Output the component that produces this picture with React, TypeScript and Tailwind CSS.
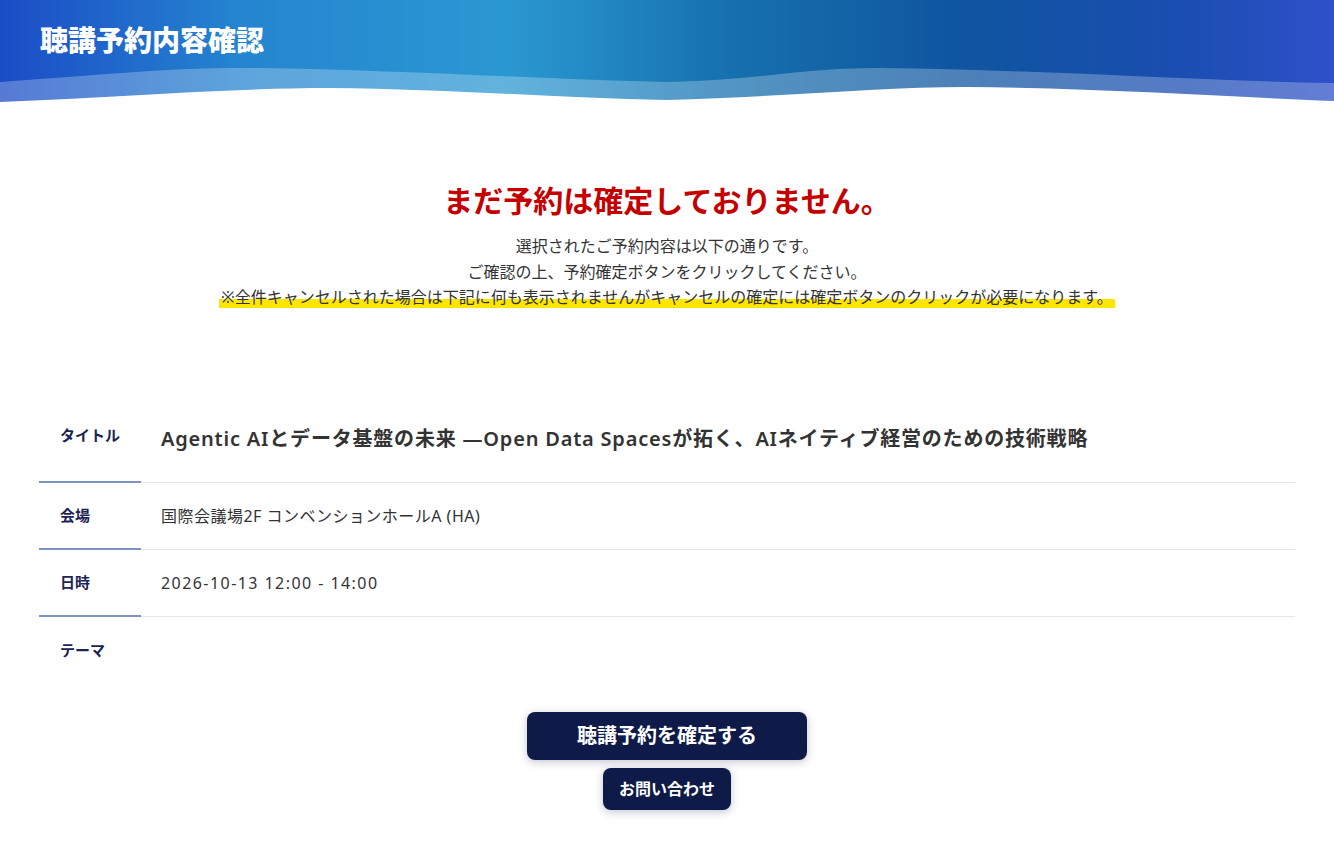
const font = 'font-["Noto_Sans","Noto_Sans_CJK_JP",sans-serif]';

function HeaderWave() {
  return (
    <svg
      className="absolute inset-x-0 bottom-0 h-[104px] w-full"
      viewBox="0 0 1334 104"
      preserveAspectRatio="none"
    >
      <path
        d="M0,82 C120,73 180,67 260,68 C400,70 560,80 667,82 C770,79 800,68 880,68 C1050,70 1200,81 1334,83 L1334,104 L0,104 Z"
        fill="#ffffff"
        fillOpacity="0.26"
      />
      <path
        d="M0,102 C120,97 230,88 330,88 C450,89 560,98 667,100 C780,97 880,87 967,87 C1100,88 1230,97 1334,101 L1334,104 L0,104 Z"
        fill="#ffffff"
      />
    </svg>
  );
}

export default function App() {
  const rows = [
    { label: '会場', value: '国際会議場2F コンベンションホールA (HA)', tracking: 'tracking-[0.03em]' },
    { label: '日時', value: '2026-10-13 12:00 - 14:00', tracking: 'tracking-[0.09em]' },
  ];

  return (
    <div className={`min-h-screen bg-white ${font}`}>
      {/* Header */}
      <header className="relative h-[104px] overflow-hidden bg-[linear-gradient(90deg,#1b4cc6_0%,#2585d0_18%,#2a98d2_38%,#1670ad_55%,#0f55a0_72%,#1a4eb0_88%,#2e50c9_100%)]">
        <HeaderWave />
        <h1 className="relative pl-[40px] pt-[20px] text-[28px] font-black leading-[40px] text-white">
          聴講予約内容確認
        </h1>
      </header>

      {/* Notice */}
      <section className="mt-[74px] text-center">
        <h2 className="text-[30px] font-bold leading-[45px] text-[#c40000]">
          まだ予約は確定しておりません。
        </h2>
        <div className="mt-[11px] text-[16px] leading-[25.6px] text-[#333333]">
          <p>選択されたご予約内容は以下の通りです。</p>
          <p>ご確認の上、予約確定ボタンをクリックしてください。</p>
          <p>
            <span className="bg-[linear-gradient(transparent_58%,#ffe600_58%)] px-[2px]">
              ※全件キャンセルされた場合は下記に何も表示されませんがキャンセルの確定には確定ボタンのクリックが必要になります。
            </span>
          </p>
        </div>
      </section>

      {/* Detail table */}
      <section className="mt-[90px] px-[39px]">
        <div className="flex items-stretch">
          <div className="w-[102px] shrink-0 border-b-2 border-[#7b93bf] pl-[21px] pt-[24px] text-[15px] font-bold leading-[21px] text-[#1b2453]">
            タイトル
          </div>
          <div className="flex-1 border-b border-[#e6e6e6] pb-[28px] pl-[20px] pt-[23px] text-[20px] font-semibold leading-[30px] tracking-[0.04em] text-[#333333]">
            Agentic AIとデータ基盤の未来 —Open Data Spacesが拓く、AIネイティブ経営のための技術戦略
          </div>
        </div>
        {rows.map((row) => (
          <div key={row.label} className="flex items-stretch">
            <div className="flex w-[102px] shrink-0 items-center border-b-2 border-[#7b93bf] pl-[21px] text-[15px] font-bold leading-[21px] text-[#1b2453]">
              {row.label}
            </div>
            <div className={`flex-1 border-b border-[#e6e6e6] py-[21px] pl-[20px] text-[16px] leading-[24px] text-[#333333] ${row.tracking}`}>
              {row.value}
            </div>
          </div>
        ))}
        <div className="flex h-[67px] items-center">
          <div className="w-[102px] shrink-0 pl-[21px] text-[15px] font-bold leading-[21px] text-[#1b2453]">
            テーマ
          </div>
          <div className="flex-1" />
        </div>
      </section>

      {/* Buttons */}
      <div className="mt-[28px] flex flex-col items-center gap-[8px] pb-10">
        <button className="h-[48px] w-[280px] rounded-[8px] bg-[#0e1a48] text-[20px] font-bold text-white shadow-[0_2px_8px_rgba(14,26,72,0.25)]">
          聴講予約を確定する
        </button>
        <button className="h-[42px] w-[128px] rounded-[8px] bg-[#0e1a48] text-[16px] font-bold text-white shadow-[0_2px_8px_rgba(14,26,72,0.25)]">
          お問い合わせ
        </button>
      </div>
    </div>
  );
}
